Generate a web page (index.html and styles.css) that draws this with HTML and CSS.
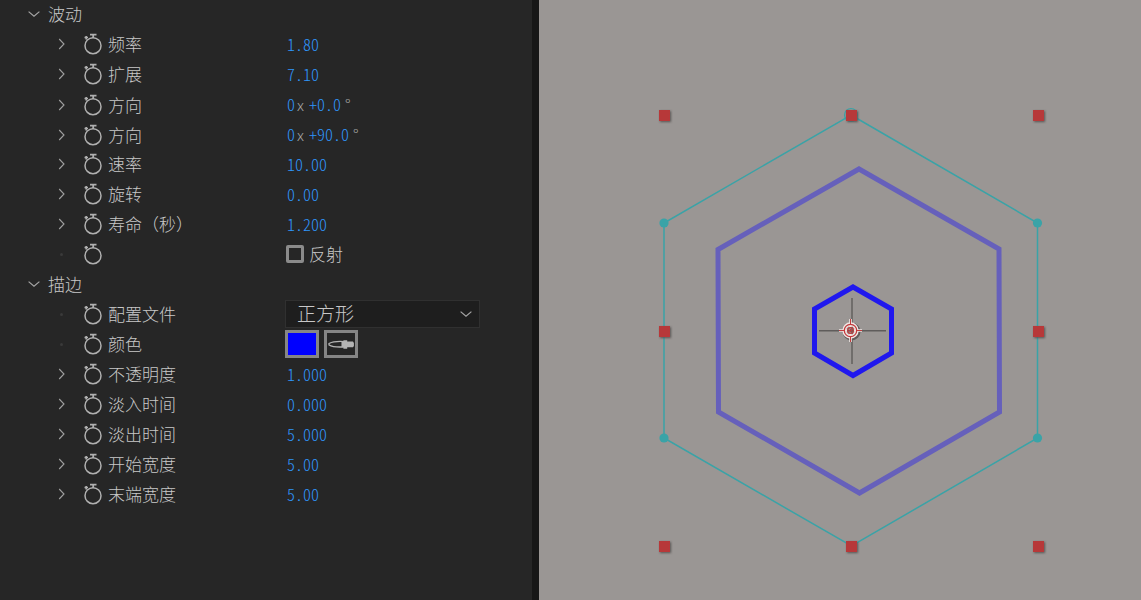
FILE: index.html
```html
<!DOCTYPE html>
<html lang="zh-CN">
<head>
<meta charset="utf-8">
<meta name="viewport" content="width=device-width, initial-scale=1">
<title>波动</title>
<link rel="stylesheet" href="styles.css">
</head>
<body>
<svg class="defs" aria-hidden="true">
  <symbol id="right" viewBox="0 0 8 12"><path d="M1.200 1 6 6 1.200 11" fill="none" stroke="currentColor" stroke-width="1.100"/></symbol>
  <symbol id="down" viewBox="0 0 12 8"><path d="M.6 1.600 6 6.200 11.400 1.600" fill="none" stroke="currentColor" stroke-width="1.200"/></symbol>
  <symbol id="watch" viewBox="0 0 20 22"><g fill="none" stroke="currentColor"><circle cx="10" cy="12.700" r="8" stroke-width="1.500"/><path d="M7 1.700h6.500M10.200 2v3" stroke-width="1.800"/><path d="M1.500 4.500h3.500M3.200 3v3.500" stroke-width="1.700"/></g></symbol>
</svg>
<main class="workspace">
  <section class="panel">
    <button class="group"><svg class="down"><use href="#down"/></svg>波动</button>
    <div class="row"><button class="twirl" aria-label="展开"><svg><use href="#right"/></svg></button><button class="watch" aria-label="关键帧"><svg><use href="#watch"/></svg></button><label class="name" for="freq">频率</label><input class="value" id="freq" value="1.80"></div>
    <div class="row"><button class="twirl" aria-label="展开"><svg><use href="#right"/></svg></button><button class="watch" aria-label="关键帧"><svg><use href="#watch"/></svg></button><label class="name" for="expand">扩展</label><input class="value" id="expand" value="7.10"></div>
    <div class="row"><button class="twirl" aria-label="展开"><svg><use href="#right"/></svg></button><button class="watch" aria-label="关键帧"><svg><use href="#watch"/></svg></button><label class="name" for="dir1">方向</label><div class="angle"><input class="value turns" id="dir1" value="0"><span class="times">x</span><input class="value deg4" aria-label="角度" value="+0.0"><span class="degree">°</span></div></div>
    <div class="row"><button class="twirl" aria-label="展开"><svg><use href="#right"/></svg></button><button class="watch" aria-label="关键帧"><svg><use href="#watch"/></svg></button><label class="name" for="dir2">方向</label><div class="angle"><input class="value turns" id="dir2" value="0"><span class="times">x</span><input class="value deg5" aria-label="角度" value="+90.0"><span class="degree">°</span></div></div>
    <div class="row"><button class="twirl" aria-label="展开"><svg><use href="#right"/></svg></button><button class="watch" aria-label="关键帧"><svg><use href="#watch"/></svg></button><label class="name" for="speed">速率</label><input class="value" id="speed" value="10.00"></div>
    <div class="row"><button class="twirl" aria-label="展开"><svg><use href="#right"/></svg></button><button class="watch" aria-label="关键帧"><svg><use href="#watch"/></svg></button><label class="name" for="spin">旋转</label><input class="value" id="spin" value="0.00"></div>
    <div class="row"><button class="twirl" aria-label="展开"><svg><use href="#right"/></svg></button><button class="watch" aria-label="关键帧"><svg><use href="#watch"/></svg></button><label class="name" for="life">寿命（秒）</label><input class="value" id="life" value="1.200"></div>
    <div class="row"><span class="dot"></span><button class="watch" aria-label="关键帧"><svg><use href="#watch"/></svg></button><span class="name"></span><label class="check"><input type="checkbox">反射</label></div>
    <button class="group"><svg class="down"><use href="#down"/></svg>描边</button>
    <div class="row"><span class="dot"></span><button class="watch" aria-label="关键帧"><svg><use href="#watch"/></svg></button><label class="name" for="profile">配置文件</label><div class="picker"><select id="profile"><option>正方形</option></select><svg class="down"><use href="#down"/></svg></div></div>
    <div class="row"><span class="dot"></span><button class="watch" aria-label="关键帧"><svg><use href="#watch"/></svg></button><label class="name" for="color">颜色</label><div class="colors"><button class="swatch blue" id="color"></button><button class="swatch" aria-label="吸管"><svg viewBox="0 0 29 23"><path d="M18 9C11 8.500 5 9.500 2 11V12.500C5 14.300 11 15 18 14.500Z" fill="none" stroke="#b4b4b4" stroke-width="1.400"/><path d="M17 7.500h4V9h6l1 1.500v3L27 15h-6v1.500h-4V15h-2V9h2Z" fill="#b4b4b4"/></svg></button></div></div>
    <div class="row"><button class="twirl" aria-label="展开"><svg><use href="#right"/></svg></button><button class="watch" aria-label="关键帧"><svg><use href="#watch"/></svg></button><label class="name" for="opacity">不透明度</label><input class="value" id="opacity" value="1.000"></div>
    <div class="row"><button class="twirl" aria-label="展开"><svg><use href="#right"/></svg></button><button class="watch" aria-label="关键帧"><svg><use href="#watch"/></svg></button><label class="name" for="fadein">淡入时间</label><input class="value" id="fadein" value="0.000"></div>
    <div class="row"><button class="twirl" aria-label="展开"><svg><use href="#right"/></svg></button><button class="watch" aria-label="关键帧"><svg><use href="#watch"/></svg></button><label class="name" for="fadeout">淡出时间</label><input class="value" id="fadeout" value="5.000"></div>
    <div class="row"><button class="twirl" aria-label="展开"><svg><use href="#right"/></svg></button><button class="watch" aria-label="关键帧"><svg><use href="#watch"/></svg></button><label class="name" for="startw">开始宽度</label><input class="value" id="startw" value="5.00"></div>
    <div class="row"><button class="twirl" aria-label="展开"><svg><use href="#right"/></svg></button><button class="watch" aria-label="关键帧"><svg><use href="#watch"/></svg></button><label class="name" for="endw">末端宽度</label><input class="value" id="endw" value="5.00"></div>
  </section>
  <section class="viewer">
    <svg viewBox="539 0 602 600" role="img" aria-label="合成预览">
      <g fill="none">
        <path d="M859 169 999 249 999.500 412 859.500 493 718.500 412 718 249.500Z" stroke="#6660bb" stroke-width="5"/>
        <path d="M853 287 891.500 309V353L853 375.500 814.500 353V309Z" stroke="#2018ee" stroke-width="5"/>
        <path d="M851 115 1037.500 223V438L851.500 546 664 438V223Z" stroke="#3aa3a7" stroke-width="1.500"/>
        <circle cx="851" cy="115" r="6.500" stroke="#3aa3a7" stroke-width="1.200"/>
        <path d="M819 330.700h67M852 298v66" stroke="#5f5c5b" stroke-width="1.400"/>
      </g>
      <g fill="#3aa3a7"><circle cx="664" cy="223" r="4.600"/><circle cx="1037.500" cy="223" r="4.600"/><circle cx="664" cy="438" r="4.600"/><circle cx="1037.500" cy="438" r="4.600"/></g>
      <g fill="none">
        <circle cx="851.500" cy="331.500" r="7.500" stroke="#625c5b" stroke-width="3"/>
        <circle cx="850.500" cy="330.500" r="6.200" stroke="#f1e6e4" stroke-width="4"/>
        <path d="M839 330.500h8M854 330.500h8M850.500 319v8M850.500 334v8" stroke="#f1e6e4" stroke-width="2.600"/>
        <circle cx="850.500" cy="330.500" r="6.200" stroke="#c23c3e" stroke-width="1.300"/>
        <circle cx="850.500" cy="330.500" r="2.800" stroke="#c23c3e" stroke-width="1.200"/>
        <path d="M839 330.500h6M849 330.500h3M856 330.500h6M850.500 319v6M850.500 329v3M850.500 336v6" stroke="#c23c3e" stroke-width="1"/>
      </g>
      <g class="handles"><path d="M659 110h11v11h-11zM846 110h11v11h-11zM1033 110h11v11h-11zM659 326h11v11h-11zM1033 326h11v11h-11zM659 541h11v11h-11zM846 541h11v11h-11zM1033 541h11v11h-11z"/></g>
    </svg>
  </section>
</main>
</body>
</html>
```
FILE: styles.css
```css
* { box-sizing: border-box; }
body {
  margin: 0;
  background: #262626;
  color: #c8c8c8;
  font: 300 17px/30px "Noto Sans CJK SC", sans-serif;
}
button, input, select {
  margin: 0;
  padding: 0;
  border: 0;
  background: none;
  color: inherit;
  font: inherit;
}
svg { display: block; }
.defs { position: absolute; width: 0; height: 0; }
.workspace { display: flex; min-height: 100vh; }
.panel {
  flex: 0 0 539px;
  border-right: 7px solid #171717;
  background: #262626;
}
.group {
  display: flex;
  align-items: center;
  gap: 8px;
  height: 30px;
  padding-left: 28px;
}
.group:first-child { height: 28px; margin-bottom: 1px; }
.down { width: 12px; height: 8px; color: #a5a5a5; }
.row {
  display: grid;
  grid-template-columns: 25px 25px 177px 1fr;
  align-items: center;
  height: 30px;
  padding-left: 58px;
}
.twirl svg { width: 8px; height: 12px; color: #a0a0a0; }
.dot {
  width: 3px;
  height: 3px;
  margin-left: 2px;
  border-radius: 50%;
  background: #3a3a3a;
}
.watch svg { width: 20px; height: 22px; color: #b0b0b0; }
.value {
  width: 80px;
  height: 24px;
  margin-left: 2px;
  color: #2f95fa;
  font-size: 16px;
  font-feature-settings: "hwid";
}
.angle { display: flex; align-items: baseline; }
.angle .value { margin-left: 0; }
.angle .turns { width: 8px; margin-left: 2px; }
.angle .deg4 { width: 32px; }
.angle .deg5 { width: 40px; }
.times { width: 14px; padding-left: 2px; color: #a8a8a8; font-size: 15px; }
.degree { padding-left: 4px; color: #a8a8a8; font-size: 16px; }
.check { display: flex; align-items: center; gap: 5px; }
.check input {
  width: 18px;
  height: 18px;
  margin-left: 1px;
  appearance: none;
  border: 3px solid #8b8b8b;
  border-radius: 2px;
}
.picker {
  display: grid;
  align-items: center;
  width: 195px;
  height: 28px;
  margin-bottom: 1px;
  border: 1px solid #303030;
  background: #1e1e1e;
}
.picker select, .picker svg { grid-area: 1 / 1; }
.picker select {
  width: 100%;
  height: 26px;
  padding: 0 0 3px 11px;
  appearance: none;
  font-size: 19px;
  line-height: 23px;
}
.picker svg { justify-self: end; margin-right: 7px; pointer-events: none; }
.colors { display: flex; gap: 5px; }
.swatch {
  width: 34px;
  height: 28px;
  border: 3px solid #858585;
}
.swatch svg { width: 100%; height: 100%; }
.blue { background: #0000ff; }
.viewer { flex: 1; min-width: 0; background: #9a9694; }
.viewer svg { width: 100%; height: 100vh; }
.handles { fill: #b73839; filter: drop-shadow(1px 1px 1px #575352); }
```
